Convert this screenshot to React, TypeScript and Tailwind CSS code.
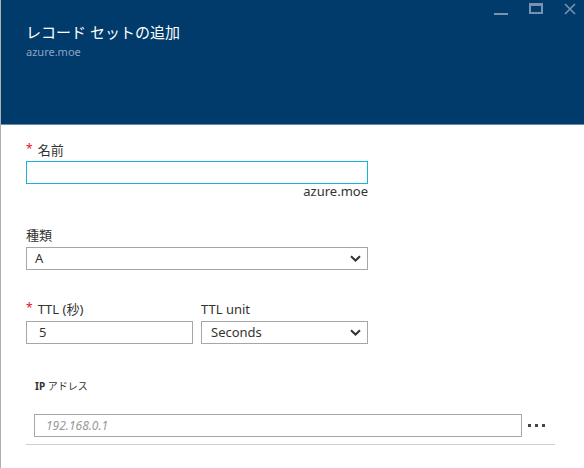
const font = { fontFamily: '"Noto Sans", "Noto Sans CJK JP", sans-serif' };

function Chevron() {
  return (
    <svg width="11" height="7" viewBox="0 0 11 7" className="shrink-0">
      <path d="M1 1.2 L5.5 5.5 L10 1.2" fill="none" stroke="#333" strokeWidth="2" />
    </svg>
  );
}

export default function App() {
  return (
    <div
      className="w-[584px] h-[468px] bg-white border-l border-[#b0b0b0] relative overflow-hidden text-[#333]"
      style={font}
    >
      {/* Header */}
      <div className="h-[125px] bg-[#003b6b] border-b border-[#6d8aa6] pl-[25px] pt-[20px]">
        <h1 className="text-[15px] leading-[24px] text-white">レコード セットの追加</h1>
        <p className="text-[11px] leading-[14px] text-[#8aa5c2] mt-[1px]">azure.moe</p>
      </div>

      {/* Window controls */}
      <div className="absolute top-[3px] right-[8px] flex items-start gap-[21px]">
        <svg width="14" height="12" viewBox="0 0 14 12">
          <rect x="0" y="10" width="14" height="2" fill="#7893b1" />
        </svg>
        <svg width="14" height="11" viewBox="0 0 14 11">
          <rect x="1" y="1" width="12" height="9" fill="none" stroke="#7893b1" strokeWidth="2" />
          <rect x="0" y="0" width="14" height="3" fill="#7893b1" />
        </svg>
        <svg width="12" height="12" viewBox="0 0 12 12">
          <path d="M1 1 L11 11 M11 1 L1 11" stroke="#7893b1" strokeWidth="1.6" />
        </svg>
      </div>

      {/* Form */}
      <div className="pl-[25px] pt-[16px]">
        <div className="w-[342px]">
          <label className="flex items-center text-[13px] leading-[18px]">
            <span className="text-[#e81123] text-[12px] mr-[5px] -mt-[3px]">*</span>
            名前
          </label>
          <div className="mt-[2px] h-[23px] border border-[#16b2e0]" />
          <p className="text-right text-[13px] leading-[16px] -mt-[1px]">azure.moe</p>

          <label className="block text-[13px] leading-[18px] mt-[27px]">種類</label>
          <div className="mt-[3px] h-[23px] border border-[#a6a6a6] flex items-center justify-between pl-[8px] pr-[6px] text-[13px]">
            <span>A</span>
            <Chevron />
          </div>

          <div className="flex gap-[8px] mt-[30px]">
            <div className="w-[167px]">
              <label className="flex items-center text-[13px] leading-[18px]">
                <span className="text-[#e81123] text-[12px] mr-[5px] -mt-[3px]">*</span>
                TTL (秒)
              </label>
              <div className="mt-[3px] h-[23px] border border-[#a6a6a6] flex items-center pl-[12px] text-[13px]">
                5
              </div>
            </div>
            <div className="flex-1">
              <label className="block text-[13px] leading-[18px]">TTL unit</label>
              <div className="mt-[3px] h-[23px] border border-[#a6a6a6] flex items-center justify-between pl-[9px] pr-[6px] text-[13px]">
                <span>Seconds</span>
                <Chevron />
              </div>
            </div>
          </div>
        </div>

        {/* IP addresses */}
        <div className="w-[529px] mt-[35px]">
          <p className="text-[10px] leading-[14px] pl-[9px]">
            <span className="font-bold">IP</span> アドレス
          </p>
          <div className="flex items-center mt-[21px] pl-[8px]">
            <div className="w-[488px] h-[23px] border border-[#a6a6a6] flex items-center pl-[11px] text-[12px] italic text-[#999]">
              192.168.0.1
            </div>
            <div className="flex gap-[4px] ml-[6px]">
              <span className="w-[3px] h-[3px] bg-[#444]" />
              <span className="w-[3px] h-[3px] bg-[#444]" />
              <span className="w-[3px] h-[3px] bg-[#444]" />
            </div>
          </div>
          <div className="mt-[7px] h-px bg-[#cfcfcf]" />
        </div>
      </div>
    </div>
  );
}
